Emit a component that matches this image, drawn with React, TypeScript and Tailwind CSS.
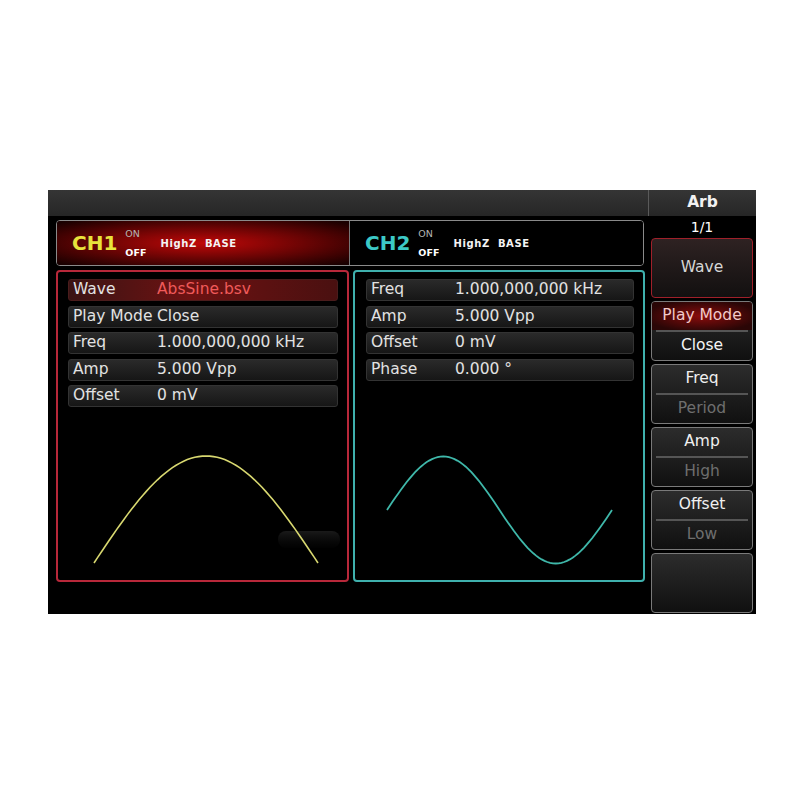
import React from "react";

const font = { fontFamily: '"DejaVu Sans", "Liberation Sans", sans-serif' };

function absSinePath() {
  const pts: string[] = [];
  for (let i = 0; i <= 60; i++) {
    const t = i / 60;
    const x = 36 + 224 * t;
    const y = 156 - 107 * Math.sin(Math.PI * t);
    pts.push(`${i === 0 ? "M" : "L"}${x.toFixed(1)},${y.toFixed(1)}`);
  }
  return pts.join(" ");
}

function sinePath() {
  const pts: string[] = [];
  for (let i = 0; i <= 80; i++) {
    const t = i / 80;
    const x = 32 + 225 * t;
    const y = 103 - 53.5 * Math.sin(2 * Math.PI * t);
    pts.push(`${i === 0 ? "M" : "L"}${x.toFixed(1)},${y.toFixed(1)}`);
  }
  return pts.join(" ");
}

function Row({ label, value, active }: { label: string; value: string; active?: boolean }) {
  return (
    <div
      className={`h-[22px] flex items-center rounded-[3px] border pl-[4px] text-[15.5px] leading-none ${
        active
          ? "border-[#4a1c1c] bg-[linear-gradient(90deg,#3a1414,#6e1212_45%,#4a1010)]"
          : "border-[#333] bg-[linear-gradient(180deg,#2a2a2a,#161616)]"
      }`}
    >
      <span className="w-[84px] shrink-0 whitespace-nowrap text-[#e2e2e2]">{label}</span>
      <span className={`whitespace-nowrap ${active ? "text-[#f05a5a]" : "text-[#e2e2e2]"}`}>{value}</span>
    </div>
  );
}

function SoftKey({ top, bottom, topActive }: { top?: string; bottom?: string; topActive?: boolean }) {
  return (
    <div className="h-[60px] rounded-[4px] border border-[#7a7a7a] bg-[linear-gradient(180deg,#2c2c2c,#101010)] flex flex-col overflow-hidden">
      {top !== undefined && (
        <>
          <div
            className={`h-[28px] flex items-center justify-center text-[15.5px] ${
              topActive
                ? "bg-[radial-gradient(ellipse_at_center,#8a0c0c,#2a0606_80%)] text-[#f2caca]"
                : "text-[#f0f0f0]"
            }`}
          >
            {top}
          </div>
          <div className="mx-[4px] h-[2px] bg-[#555]" />
          <div
            className={`flex-1 flex items-center justify-center text-[15.5px] ${
              topActive ? "text-[#f4f4f4]" : "text-[#6e6e6e]"
            }`}
          >
            {bottom}
          </div>
        </>
      )}
    </div>
  );
}

function ChannelTag({ name, color }: { name: string; color: string }) {
  return (
    <>
      <span className={`text-[20px] font-bold leading-none ${color}`}>{name}</span>
      <div className="ml-[8px] flex flex-col text-[9.5px] leading-[11px]">
        <span className="text-[#b4b4b4]">ON</span>
        <span className="mt-[8px] font-bold text-white">OFF</span>
      </div>
      <span className="ml-[14px] text-[10px] font-bold text-[#f4f4f4] tracking-[0.06em] whitespace-nowrap">
        HighZ&nbsp;&nbsp;BASE
      </span>
    </>
  );
}

export default function App() {
  return (
    <div className="w-[800px] h-[800px] bg-white pt-[190px] pl-[48px]" style={font}>
      <div className="w-[708px] h-[424px] bg-black flex">
        {/* left side */}
        <div className="w-[600px] flex flex-col">
          <div className="h-[26px] bg-[linear-gradient(180deg,#353535,#262626)]" />
          <div className="mt-[4px] ml-[8px] w-[588px] h-[46px] rounded-[4px] border border-[#8a8a8a] flex overflow-hidden">
            <div className="w-[293px] flex items-center pl-[15px] bg-[radial-gradient(ellipse_at_50%_50%,#c00808,#6a0404_50%,#1a0000_95%)] border-r border-[#777]">
              <ChannelTag name="CH1" color="text-[#e8e23c]" />
            </div>
            <div className="flex-1 flex items-center pl-[15px] bg-black">
              <ChannelTag name="CH2" color="text-[#3cc9c6]" />
            </div>
          </div>
          <div className="mt-[4px] ml-[8px] flex gap-[4px] h-[312px]">
            <div className="w-[293px] rounded-[4px] border-2 border-[#b8283a] flex flex-col">
              <div className="h-[135px] pt-[7px] pl-[10px] pr-[9px] flex flex-col gap-[4.5px]">
                <Row label="Wave" value="AbsSine.bsv" active />
                <Row label="Play Mode" value="Close" />
                <Row label="Freq" value="1.000,000,000 kHz" />
                <Row label="Amp" value="5.000 Vpp" />
                <Row label="Offset" value="0 mV" />
              </div>
              <svg width="289" height="173" className="block">
                <defs>
                  <linearGradient id="glare" x1="0" y1="0" x2="0" y2="1">
                    <stop offset="0" stopColor="#3a3a3a" stopOpacity="0.45" />
                    <stop offset="1" stopColor="#141414" stopOpacity="0.1" />
                  </linearGradient>
                </defs>
                <rect x="220" y="124" width="62" height="17" rx="8" fill="url(#glare)" />
                <path d={absSinePath()} fill="none" stroke="#d8d870" strokeWidth="1.6" />
              </svg>
            </div>
            <div className="w-[292px] rounded-[4px] border-2 border-[#3fb0ad] flex flex-col">
              <div className="h-[135px] pt-[7px] pl-[11px] pr-[9px] flex flex-col gap-[4.5px]">
                <Row label="Freq" value="1.000,000,000 kHz" />
                <Row label="Amp" value="5.000 Vpp" />
                <Row label="Offset" value="0 mV" />
                <Row label="Phase" value="0.000 °" />
              </div>
              <svg width="288" height="173" className="block">
                <path d={sinePath()} fill="none" stroke="#3fb8aa" strokeWidth="1.8" />
              </svg>
            </div>
          </div>
        </div>
        {/* right softkeys */}
        <div className="w-[108px] flex flex-col">
          <div className="h-[26px] bg-[linear-gradient(180deg,#353535,#262626)] border-l border-[#5a5a5a] flex items-center justify-center text-[15.5px] font-bold text-[#f2f2f2]">
            Arb
          </div>
          <div className="h-[22px] flex items-center justify-center text-[14px] text-white">1/1</div>
          <div className="px-[3px] flex flex-col gap-[3px]">
            <div className="h-[60px] rounded-[4px] border border-[#a0202a] bg-[linear-gradient(180deg,#2e2222,#121010)] flex items-center justify-center text-[15.5px] text-[#d6d6d6]">
              Wave
            </div>
            <SoftKey top="Play Mode" bottom="Close" topActive />
            <SoftKey top="Freq" bottom="Period" />
            <SoftKey top="Amp" bottom="High" />
            <SoftKey top="Offset" bottom="Low" />
            <SoftKey />
          </div>
        </div>
      </div>
    </div>
  );
}
